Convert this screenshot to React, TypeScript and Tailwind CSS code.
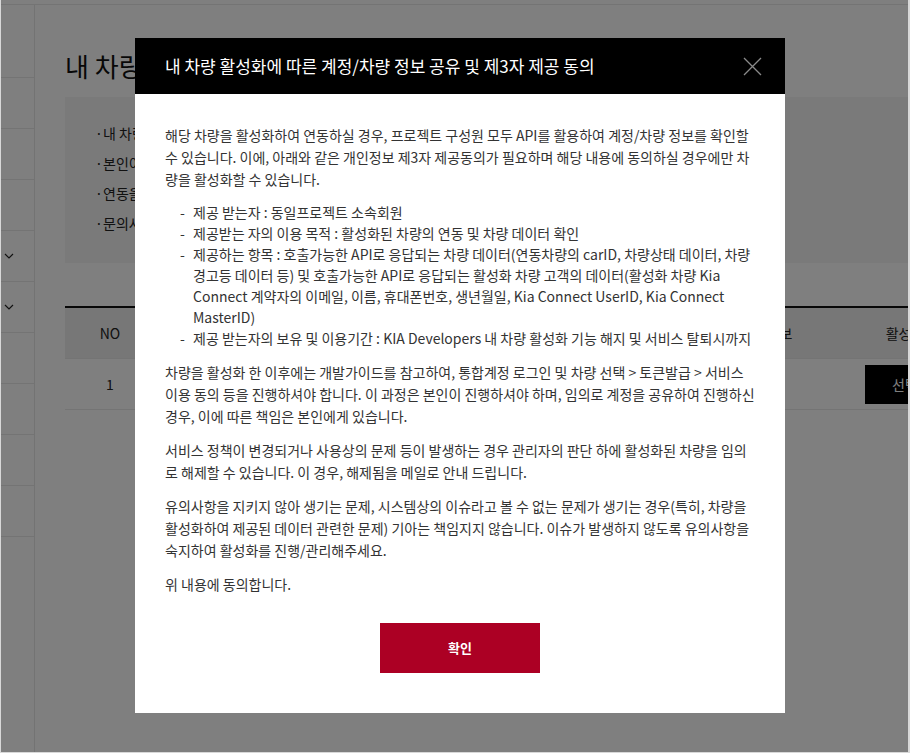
import React from 'react';

const font = { fontFamily: '"Noto Sans CJK KR", "Noto Sans", "Liberation Sans", sans-serif' };

const sideRows = [false, false, false, true, true, false, false, false, false];

const notes = [
  '내 차량 활성화는 Kia Connect 서비스에 가입된 차량만 가능합니다.',
  '본인이 소유한 차량만 활성화할 수 있습니다.',
  '연동을 해제하면 해당 차량의 데이터를 더 이상 조회할 수 없습니다.',
  '문의사항은 고객센터를 통해 접수해 주세요.',
];

const terms = [
  '제공 받는자 : 동일프로젝트 소속회원',
  '제공받는 자의 이용 목적 : 활성화된 차량의 연동 및 차량 데이터 확인',
  '제공하는 항목 : 호출가능한 API로 응답되는 차량 데이터(연동차량의 carID, 차량상태 데이터, 차량 경고등 데이터 등) 및 호출가능한 API로 응답되는 활성화 차량 고객의 데이터(활성화 차량 Kia Connect 계약자의 이메일, 이름, 휴대폰번호, 생년월일, Kia Connect UserID, Kia Connect MasterID)',
  '제공 받는자의 보유 및 이용기간 : KIA Developers 내 차량 활성화 기능 해지 및 서비스 탈퇴시까지',
];

function Page() {
  return (
    <div className="flex flex-col h-full bg-white text-[#222]">
      <div className="h-[5px] border-b border-[#e8e8e8] shrink-0" />
      <div className="flex flex-1 overflow-hidden">
        {/* sidebar */}
        <div className="w-[34px] shrink-0 border-r border-[#e6e6e6] flex flex-col">
          <div className="h-[73px] border-b border-[#e8e8e8]" />
          {sideRows.map((chev, i) => (
            <div key={i} className="h-[51px] border-b border-[#e8e8e8] flex items-center pl-[3px]">
              {chev && (
                <svg width="10" height="6" viewBox="0 0 10 6" fill="none">
                  <path d="M1 1l4 4 4-4" stroke="#222" strokeWidth="1.2" />
                </svg>
              )}
            </div>
          ))}
        </div>

        {/* main */}
        <div className="flex-1 overflow-hidden pl-[30px] pt-[43px]">
          <div className="w-[1000px]">
            <h1 className="text-[26px] leading-[36px] font-normal text-[#111] mb-[13px]">내 차량 관리</h1>
            <div className="bg-[#f4f4f4] h-[166px] pl-[30px] pt-[21px]">
              {notes.map(n => (
                <div key={n} className="text-[14px] leading-[30px] text-[#222] flex">
                  <span className="w-[8px] shrink-0">·</span>
                  <span>{n}</span>
                </div>
              ))}
            </div>

            <div className="mt-[43px] border-t-2 border-[#111]">
              <div className="flex h-[51px] items-center bg-[#eeeeee] border-b border-[#e8e8e8] text-[14px] text-[#222]">
                <div className="w-[90px] text-center">NO</div>
                <div className="w-[250px] text-center">차량번호</div>
                <div className="w-[260px] text-center">차량명</div>
                <div className="w-[200px] text-center">차량 정보</div>
                <div className="w-[80px] text-center">활성화</div>
              </div>
              <div className="flex h-[51px] items-center border-b border-[#e8e8e8] text-[14px] text-[#222]">
                <div className="w-[90px] text-center">1</div>
                <div className="w-[250px] text-center">12가 3456</div>
                <div className="w-[260px] text-center">EV6</div>
                <div className="w-[200px] text-center">-</div>
                <div className="w-[80px] h-[39px] bg-black text-white flex items-center justify-center">선택</div>
              </div>
            </div>
          </div>
        </div>
      </div>
    </div>
  );
}

function ConsentModal() {
  return (
    <div className="absolute left-[134px] top-[38px] w-[650px] bg-white">
      <div className="h-[56px] bg-black flex items-center justify-between pl-[30px] pr-[23px]">
        <h2 className="text-[17px] text-white font-normal">내 차량 활성화에 따른 계정/차량 정보 공유 및 제3자 제공 동의</h2>
        <svg width="19" height="19" viewBox="0 0 19 19" fill="none">
          <path d="M1 1l17 17M18 1L1 18" stroke="#8a8a8a" strokeWidth="1.3" />
        </svg>
      </div>
      <div className="px-[30px] pt-[30px] pb-[40px] text-[14px] text-[#333]">
        <p className="leading-[22px] mb-[12px]">
          해당 차량을 활성화하여 연동하실 경우, 프로젝트 구성원 모두 API를 활용하여 계정/차량 정보를 확인할 수 있습니다. 이에, 아래와 같은 개인정보 제3자 제공동의가 필요하며 해당 내용에 동의하실 경우에만 차량을 활성화할 수 있습니다.
        </p>
        <ul className="mb-[12px] pl-[15px]">
          {terms.map(t => (
            <li key={t} className="flex leading-[21px]">
              <span className="w-[13px] shrink-0">-</span>
              <span>{t}</span>
            </li>
          ))}
        </ul>
        <p className="leading-[22px] mb-[12px]">
          차량을 활성화 한 이후에는 개발가이드를 참고하여, 통합계정 로그인 및 차량 선택 &gt; 토큰발급 &gt; 서비스 이용 동의 등을 진행하셔야 합니다. 이 과정은 본인이 진행하셔야 하며, 임의로 계정을 공유하여 진행하신 경우, 이에 따른 책임은 본인에게 있습니다.
        </p>
        <p className="leading-[22px] mb-[12px]">
          서비스 정책이 변경되거나 사용상의 문제 등이 발생하는 경우 관리자의 판단 하에 활성화된 차량을 임의로 해제할 수 있습니다. 이 경우, 해제됨을 메일로 안내 드립니다.
        </p>
        <p className="leading-[22px] mb-[12px]">
          유의사항을 지키지 않아 생기는 문제, 시스템상의 이슈라고 볼 수 없는 문제가 생기는 경우(특히, 차량을 활성화하여 제공된 데이터 관련한 문제) 기아는 책임지지 않습니다. 이슈가 발생하지 않도록 유의사항을 숙지하여 활성화를 진행/관리해주세요.
        </p>
        <p className="leading-[22px]">위 내용에 동의합니다.</p>
        <div className="flex justify-center mt-[28px]">
          <button className="w-[160px] h-[50px] bg-[#ac0024] text-white text-[13px] font-bold">확인</button>
        </div>
      </div>
    </div>
  );
}

export default function App() {
  return (
    <div style={font} className="w-[910px] h-[753px] border-l border-r-2 border-b border-[#d8d8d8] overflow-hidden">
      <div className="relative w-full h-full">
        <Page />
        <div className="absolute inset-0 bg-black/50" />
        <ConsentModal />
      </div>
    </div>
  );
}
